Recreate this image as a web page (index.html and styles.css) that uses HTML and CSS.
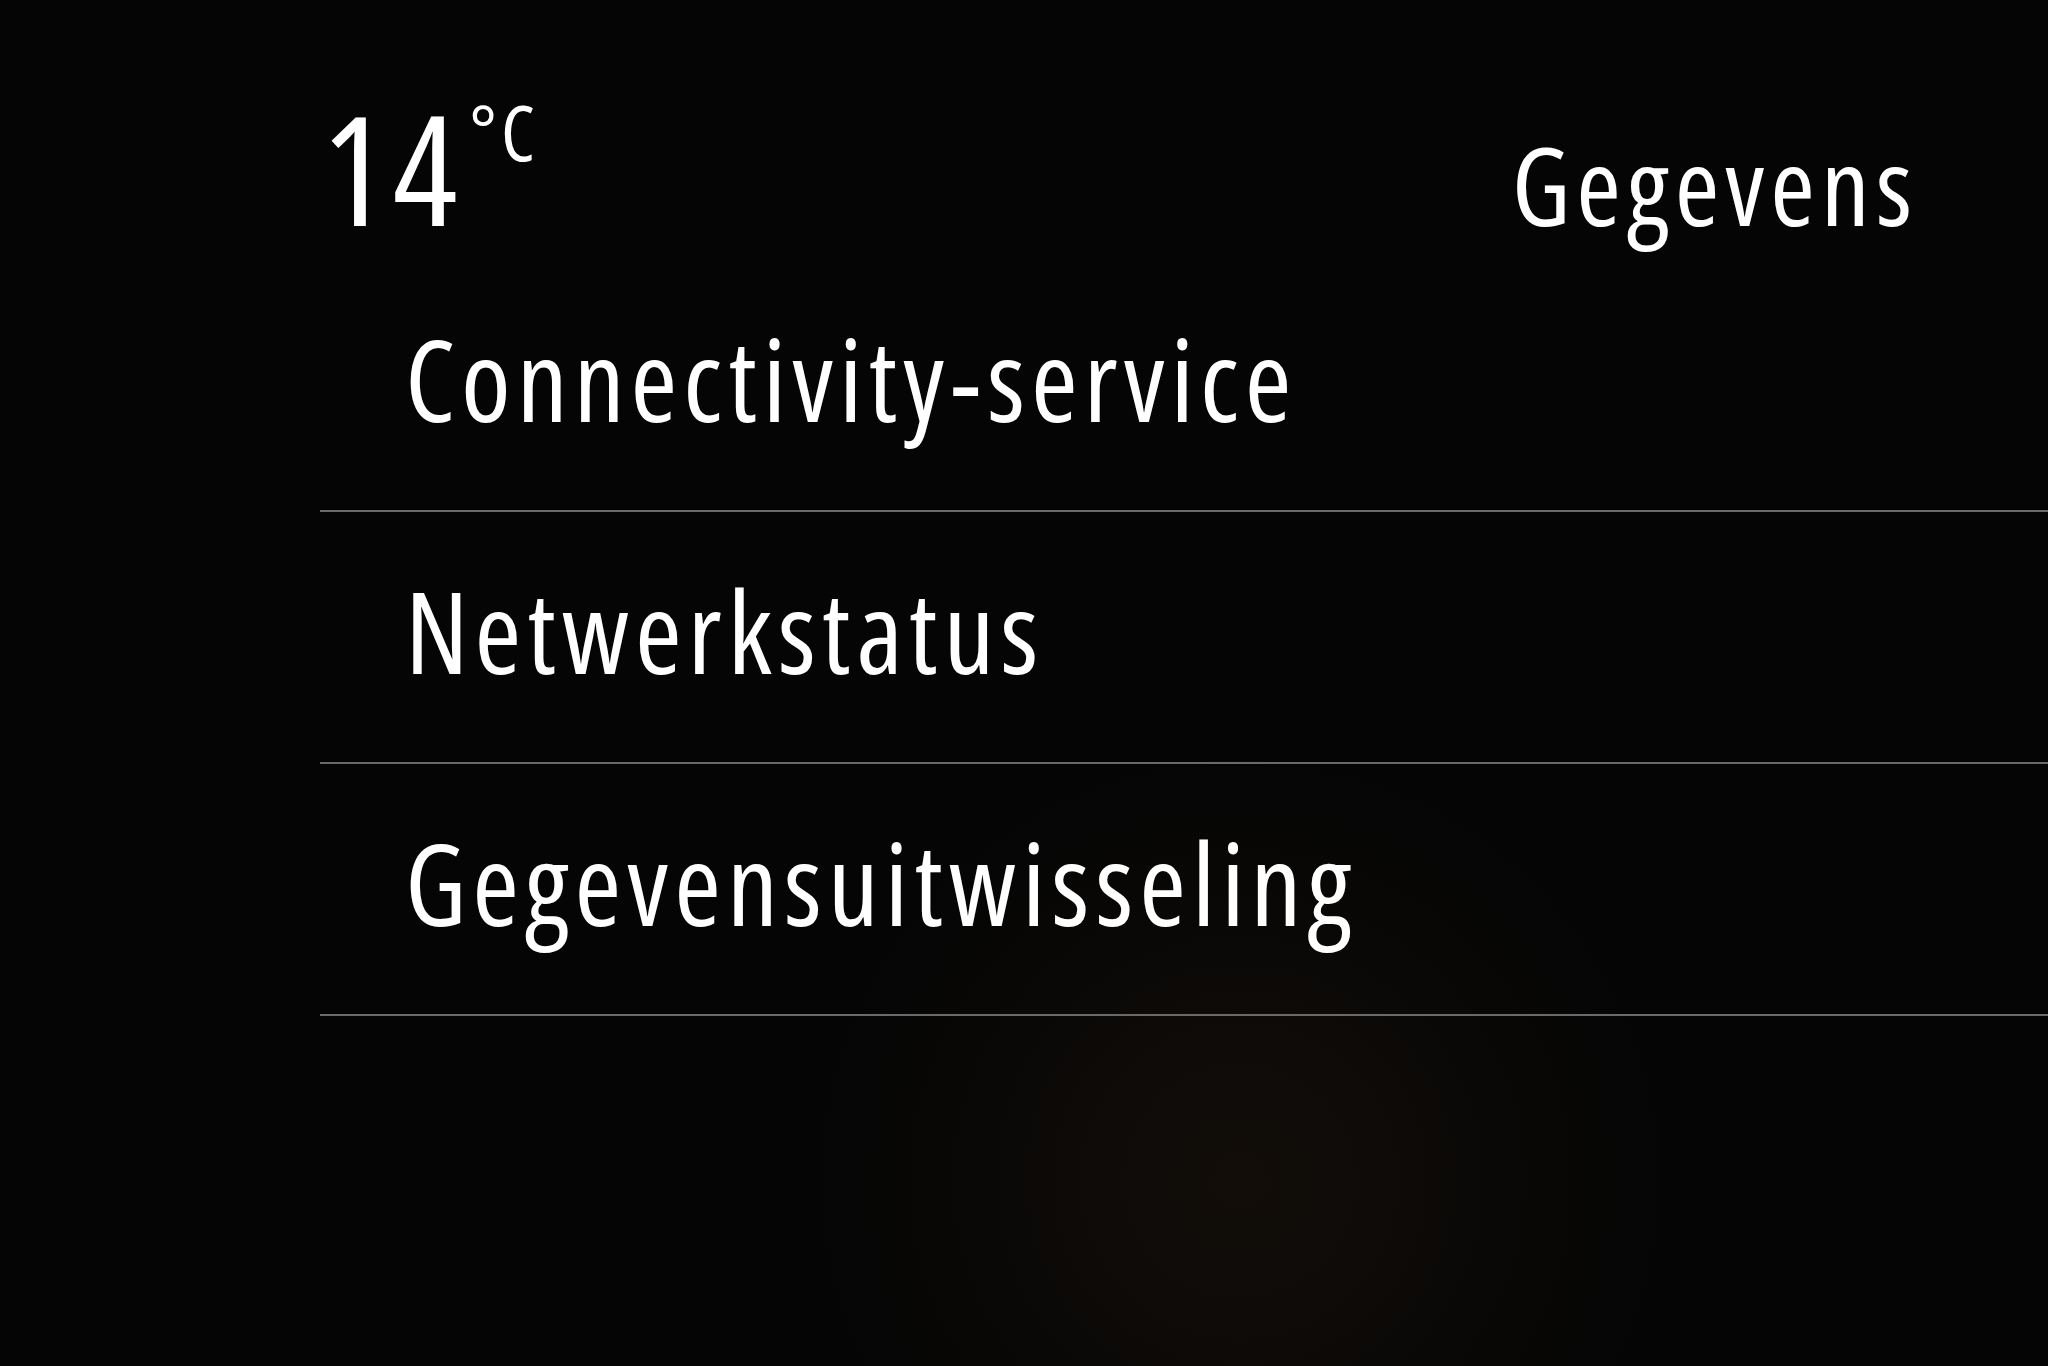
FILE: index.html
```html
<!DOCTYPE html>
<html lang="nl">
<head>
<meta charset="UTF-8">
<meta name="viewport" content="width=device-width, initial-scale=1.0">
<title>Gegevens</title>
<link rel="stylesheet" href="styles.css">
</head>
<body>
<div class="screen">
    <div class="header">
        <div class="temp">14<span class="unit">°C</span></div>
        <div class="title">Gegevens</div>
    </div>
    <ul class="menu">
        <li class="item">Connectivity-service</li>
        <li class="item">Netwerkstatus</li>
        <li class="item">Gegevensuitwisseling</li>
    </ul>
</div>
</body>
</html>
```

FILE: styles.css
```css
html, body {
    margin: 0;
    padding: 0;
}
body {
    background-color: #050505;
    background-image: radial-gradient(circle at 1240px 1180px, rgba(38, 26, 16, 0.4), rgba(5, 5, 5, 0) 420px);
    color: #ffffff;
    font-family: 'Open Sans', 'Noto Sans', sans-serif;
    font-stretch: 75%;
    font-weight: 500;
    width: 2048px;
    height: 1366px;
    overflow: hidden;
}
.screen {
    padding-left: 320px;
}
.header {
    display: flex;
    justify-content: space-between;
    align-items: baseline;
    padding-top: 92px;
    padding-right: 130px;
    height: 260px;
    box-sizing: border-box;
}
.temp {
    font-size: 152px;
    font-weight: 400;
    line-height: 1;
    letter-spacing: 6px;
    padding-left: 2px;
}
.unit {
    font-size: 76px;
    vertical-align: top;
    position: relative;
    top: 2px;
    letter-spacing: 4px;
    margin-left: 6px;
}
.title {
    font-size: 108px;
    line-height: 1;
    letter-spacing: 6px;
}
.menu {
    list-style: none;
    margin: 0;
    padding: 0;
}
.item {
    height: 252px;
    box-sizing: border-box;
    display: flex;
    align-items: center;
    padding-left: 85px;
    padding-bottom: 14px;
    font-size: 113px;
    line-height: 1;
    letter-spacing: 6px;
    border-bottom: 2px solid #6a6a6a;
}
```
